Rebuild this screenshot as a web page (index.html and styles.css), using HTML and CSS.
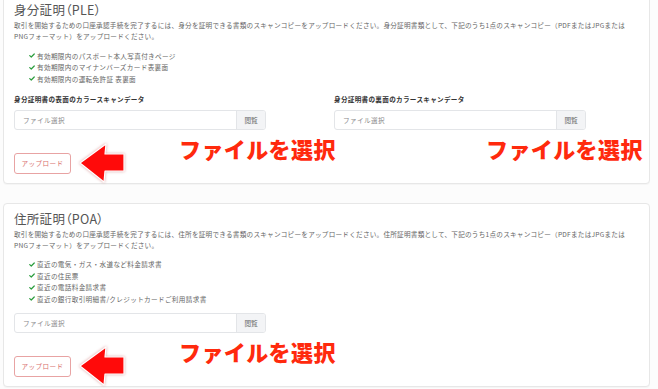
FILE: index.html
```html
<!DOCTYPE html>
<html>
<head>
  <title>本人確認書類のアップロード</title>
  <meta charset="UTF-8">
  <meta name="viewport" content="width=device-width,initial-scale=1">
  <link rel="stylesheet" href="styles.css">
</head>

<body>
  <div class="wrapper">

    <!-- 身分証明 -->
    <section class="card">
      <h2>身分証明（PLE）</h2>
      <p>取引を開始するための口座承認手続を完了するには、身分を証明できる書類のスキャンコピーをアップロードください。身分証明書類として、下記のうち1点のスキャンコピー（PDFまたはJPGまたはPNGフォーマット）をアップロードください。</p>
      <ul class="checks">
        <li><svg class="tick" viewBox="0 0 8 6"><path d="M1 3.2 L3 5 L7 1"/></svg>有効期限内のパスポート本人写真付きページ</li>
        <li><svg class="tick" viewBox="0 0 8 6"><path d="M1 3.2 L3 5 L7 1"/></svg>有効期限内のマイナンバーズカード表裏面</li>
        <li><svg class="tick" viewBox="0 0 8 6"><path d="M1 3.2 L3 5 L7 1"/></svg>有効期限内の運転免許証 表裏面</li>
      </ul>
      <div class="cols">
        <div class="field">
          <label>身分証明書の表面のカラースキャンデータ</label>
          <div class="file-input"><span class="file-name">ファイル選択</span><span class="browse">閲覧</span></div>
        </div>
        <div class="field">
          <label>身分証明書の裏面のカラースキャンデータ</label>
          <div class="file-input"><span class="file-name">ファイル選択</span><span class="browse">閲覧</span></div>
        </div>
      </div>
      <div class="actions">
        <button class="btn-upload">アップロード</button>
        <svg class="arrow" viewBox="0 0 46 40"><polygon points="1,20 27,1 26,11 45,11 45,28 26,28 25,39"/></svg>
        <span class="note">ファイルを選択</span>
        <span class="note note-right">ファイルを選択</span>
      </div>
    </section>

    <!-- 住所証明 -->
    <section class="card">
      <h2>住所証明（POA）</h2>
      <p>取引を開始するための口座承認手続を完了するには、住所を証明できる書類のスキャンコピーをアップロードください。住所証明書類として、下記のうち1点のスキャンコピー（PDFまたはJPGまたはPNGフォーマット）をアップロードください。</p>
      <ul class="checks">
        <li><svg class="tick" viewBox="0 0 8 6"><path d="M1 3.2 L3 5 L7 1"/></svg>直近の電気・ガス・水道など料金請求書</li>
        <li><svg class="tick" viewBox="0 0 8 6"><path d="M1 3.2 L3 5 L7 1"/></svg>直近の住民票</li>
        <li><svg class="tick" viewBox="0 0 8 6"><path d="M1 3.2 L3 5 L7 1"/></svg>直近の電話料金請求書</li>
        <li><svg class="tick" viewBox="0 0 8 6"><path d="M1 3.2 L3 5 L7 1"/></svg>直近の銀行取引明細書/クレジットカードご利用請求書</li>
      </ul>
      <div class="cols">
        <div class="field">
          <div class="file-input"><span class="file-name">ファイル選択</span><span class="browse">閲覧</span></div>
        </div>
      </div>
      <div class="actions">
        <button class="btn-upload">アップロード</button>
        <svg class="arrow" viewBox="0 0 46 40"><polygon points="1,20 27,1 26,11 45,11 45,28 26,28 25,39"/></svg>
        <span class="note">ファイルを選択</span>
      </div>
    </section>

  </div>
</body>
</html>
```

FILE: styles.css
```css
*, *:before, *:after {
  box-sizing: border-box;
}

html, body {
  width: 100%;
  height: 100%;
}

body {
  margin: 0;
  background: #fcfcfc;
  font-family: "Noto Sans CJK JP", "Noto Sans", sans-serif;
  color: #555;
  overflow: hidden;
}

.wrapper {
  display: flex;
  flex-direction: column;
  gap: 19px;
  margin-top: -6px;
  padding: 0 8px 0 3px;
}

.card {
  background: #fff;
  border: 1px solid #e7e7e7;
  border-radius: 4px;
  box-shadow: 0 1px 1px rgba(0,0,0,.03);
  padding: 7px 10px 9px;
}

.card h2 {
  margin: 0;
  font-size: 12.5px;
  line-height: 16px;
  font-weight: 400;
  font-feature-settings: "palt";
  letter-spacing: .3px;
  color: #555;
}

.card p {
  margin: 2px 0 0;
  font-size: 6.6px;
  line-height: 11px;
  letter-spacing: .25px;
  color: #666;
}

.checks {
  list-style: none;
  margin: 8px 0 0;
  padding: 0 0 0 15px;
}

.checks li {
  display: flex;
  align-items: center;
  height: 11.5px;
  font-size: 6.6px;
  letter-spacing: .35px;
  color: #666;
}

.tick {
  width: 6px;
  height: 5px;
  margin-right: 2px;
  fill: none;
  stroke: #2a9d3c;
  stroke-width: 1.6;
  stroke-linecap: round;
  stroke-linejoin: round;
}

.cols {
  display: grid;
  grid-template-columns: 252px 252px;
  column-gap: 68px;
  margin-top: 8px;
}

.field label {
  display: block;
  margin-bottom: 5px;
  font-size: 6.6px;
  line-height: 12px;
  letter-spacing: .3px;
  font-weight: 700;
  color: #333;
}

.file-input {
  display: flex;
  height: 20px;
  border: 1px solid #e3e5e8;
  border-radius: 3px;
  overflow: hidden;
  font-size: 6.6px;
}

.file-name {
  flex: 1;
  display: flex;
  align-items: center;
  padding-left: 8px;
  color: #888;
  letter-spacing: .4px;
}

.browse {
  width: 29px;
  display: flex;
  align-items: center;
  justify-content: center;
  background: #f3f4f6;
  border-left: 1px solid #e3e5e8;
  color: #666;
}

.actions {
  position: relative;
  display: flex;
  align-items: center;
  gap: 8px;
  height: 21px;
  margin-top: 23px;
}

.btn-upload {
  width: 57px;
  height: 21px;
  padding: 0;
  background: #fff;
  border: 1px solid #e8a3a3;
  border-radius: 3px;
  font-family: inherit;
  font-size: 6.6px;
  letter-spacing: .4px;
  color: #d9706e;
}

.arrow {
  width: 46px;
  height: 40px;
  margin: -10px 0;
  fill: #ff0a0a;
  stroke: #fff;
  stroke-width: 1.2;
  stroke-linejoin: round;
  filter: drop-shadow(0 0 1.5px rgba(160,0,0,.35));
}

.note {
  position: absolute;
  top: -16px;
  left: 165px;
  font-size: 22px;
  line-height: 22px;
  font-weight: 900;
  letter-spacing: .4px;
  color: #ff2a0d;
  white-space: nowrap;
}

.note-right {
  left: 472px;
}
```
